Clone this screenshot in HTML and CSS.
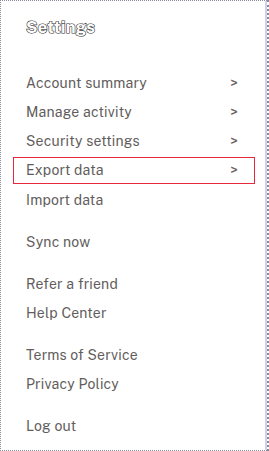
FILE: index.html
```html
<!DOCTYPE html>
<html lang="en">
<head>
  <meta charset="UTF-8">
  <title>Settings</title>
  <link rel="stylesheet" href="styles.css">
</head>
<body>
<div class="panel">
  <h1 class="title">Settings</h1>
  <ul class="menu first">
    <li class="item">Account summary <span class="chev">&gt;</span></li>
    <li class="item">Manage activity <span class="chev">&gt;</span></li>
    <li class="item">Security settings <span class="chev">&gt;</span></li>
    <li class="item focused">Export data <span class="chev">&gt;</span></li>
    <li class="item">Import data</li>
  </ul>
  <ul class="menu">
    <li class="item">Sync now</li>
  </ul>
  <ul class="menu">
    <li class="item">Refer a friend</li>
    <li class="item">Help Center</li>
  </ul>
  <ul class="menu">
    <li class="item">Terms of Service</li>
    <li class="item">Privacy Policy</li>
  </ul>
  <ul class="menu">
    <li class="item">Log out</li>
  </ul>
</div>
</body>
</html>
```

FILE: styles.css
```css
html, body { margin: 0; padding: 0; background: #fff; }

.panel {
  box-sizing: border-box;
  width: 269px;
  height: 451px;
  border: 1px dotted #8a8a9a;
  border-right-width: 2px;
  box-shadow: inset -2px 0 0 #cfcff0;
  background: #fff;
  font-family: "Public Sans", "Libre Franklin", Inter, "Noto Sans", sans-serif;
  color: #625d5c;
}

.title {
  margin: 0;
  padding: 16px 0 0 25px;
  height: 52px;
  box-sizing: border-box;
  font-size: 16.5px;
  font-weight: 700;
  line-height: 20px;
  color: #fff;
  -webkit-text-stroke: 1.2px #333;
  paint-order: stroke fill;
  letter-spacing: 0.3px;
}

.menu {
  list-style: none;
  margin: 15px 0 0 12px;
  padding: 0;
  width: 242px;
  display: flex;
  flex-direction: column;
  gap: 2.25px;
}
.menu.first { margin-top: 16px; }

.item {
  box-sizing: border-box;
  height: 27px;
  border: 1px solid transparent;
  padding: 0 16px 0 12px;
  display: flex;
  align-items: center;
  justify-content: space-between;
  font-size: 14px;
  font-weight: 400;
  letter-spacing: 0.2px;
}
.item.focused { border-color: #e8283c; }

.chev { font-size: 14px; color: #6a6464; }
```
